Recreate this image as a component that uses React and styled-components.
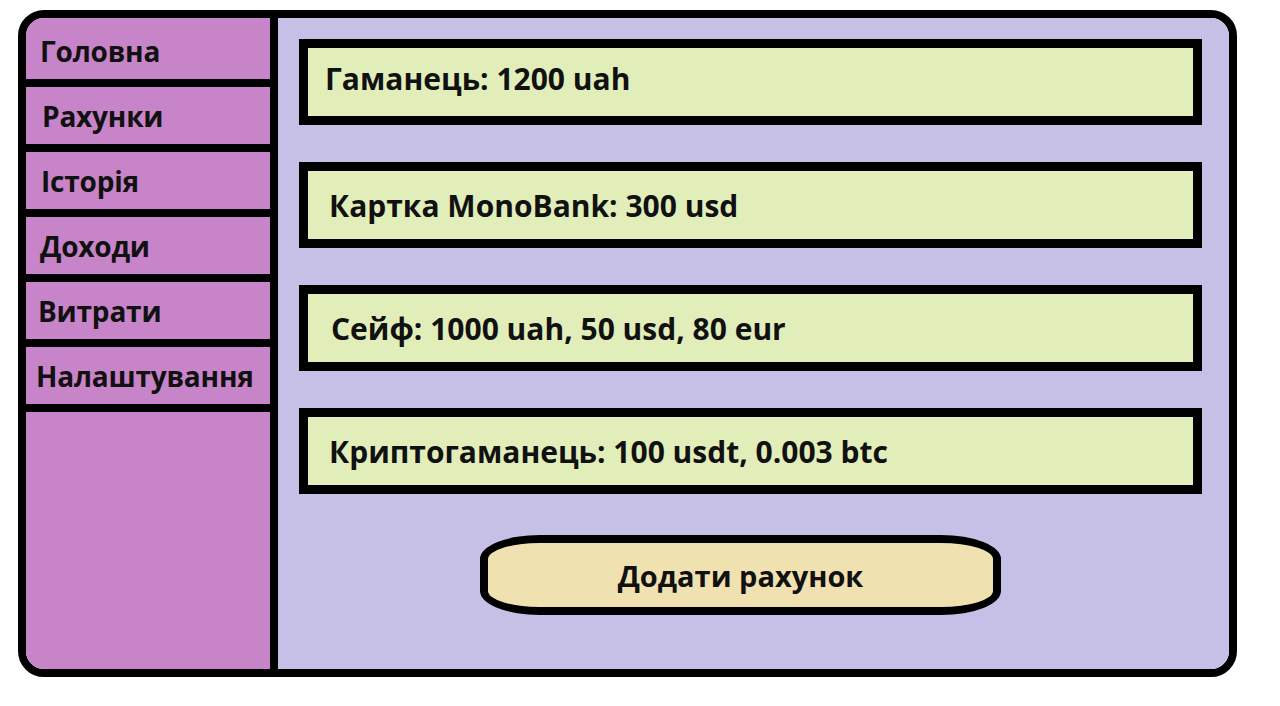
import styled, { createGlobalStyle } from "styled-components";

const GlobalStyle = createGlobalStyle`
  html, body {
    margin: 0;
    padding: 0;
    background: #ffffff;
  }
  body {
    font-family: "Open Sans", "Noto Sans", "Liberation Sans", sans-serif;
    color: #111111;
  }
`;

const Page = styled.div`
  width: 1280px;
  height: 706px;
  box-sizing: border-box;
  padding: 10px 0 0 18px;
`;

const Frame = styled.div`
  display: flex;
  width: 1219px;
  height: 667px;
  box-sizing: border-box;
  border: 8px solid #000;
  border-radius: 26px;
  overflow: hidden;
`;

const Sidebar = styled.nav`
  display: flex;
  flex-direction: column;
  width: 244px;
  flex-shrink: 0;
  padding-top: 4px;
  background: #c884c8;
  border-right: 8px solid #000;
`;

const NavItem = styled.a`
  display: flex;
  align-items: center;
  height: 57px;
  padding-left: ${({ $indent }) => $indent}px;
  border-bottom: 8px solid #000;
  font-size: 28px;
  font-weight: 700;
  letter-spacing: -0.2px;
  color: #111;
  text-decoration: none;
  white-space: nowrap;
`;

const Content = styled.main`
  flex: 1;
  display: flex;
  flex-direction: column;
  padding: 21px 27px 0 21px;
  background: #c6c0e6;
`;

const AccountList = styled.div`
  display: flex;
  flex-direction: column;
  gap: 37px;
`;

const AccountCard = styled.div`
  display: flex;
  align-items: center;
  height: 86px;
  box-sizing: border-box;
  padding-left: ${({ $indent }) => $indent}px;
  padding-bottom: ${({ $lift }) => $lift || 0}px;
  border: 9px solid #000;
  background: #e2eeb9;
  font-size: 30px;
  font-weight: 700;
  white-space: nowrap;
`;

const ButtonRow = styled.div`
  display: flex;
  justify-content: center;
  padding: 41px 20px 0 0;
`;

const AddButton = styled.button`
  width: 521px;
  height: 80px;
  box-sizing: border-box;
  border: 8px solid #000;
  border-radius: 60px / 24px;
  background: #f0e2b0;
  font-family: inherit;
  font-size: 29px;
  font-weight: 700;
  color: #111;
  cursor: pointer;
`;

const navItems = [
  { label: "Головна", indent: 14 },
  { label: "Рахунки", indent: 16 },
  { label: "Історія", indent: 15 },
  { label: "Доходи", indent: 14 },
  { label: "Витрати", indent: 12 },
  { label: "Налаштування", indent: 10 },
];

const accounts = [
  { text: "Гаманець: 1200 uah", indent: 17, lift: 8 },
  { text: "Картка MonoBank: 300 usd", indent: 21 },
  { text: "Сейф: 1000 uah, 50 usd, 80 eur", indent: 23 },
  { text: "Криптогаманець: 100 usdt, 0.003 btc", indent: 21 },
];

const App = () => {
  return (
    <Page>
      <GlobalStyle />
      <Frame>
        <Sidebar>
          {navItems.map((item) => (
            <NavItem key={item.label} $indent={item.indent}>
              {item.label}
            </NavItem>
          ))}
        </Sidebar>
        <Content>
          <AccountList>
            {accounts.map((acc) => (
              <AccountCard key={acc.text} $indent={acc.indent} $lift={acc.lift}>
                {acc.text}
              </AccountCard>
            ))}
          </AccountList>
          <ButtonRow>
            <AddButton>Додати рахунок</AddButton>
          </ButtonRow>
        </Content>
      </Frame>
    </Page>
  );
};

export default App;
